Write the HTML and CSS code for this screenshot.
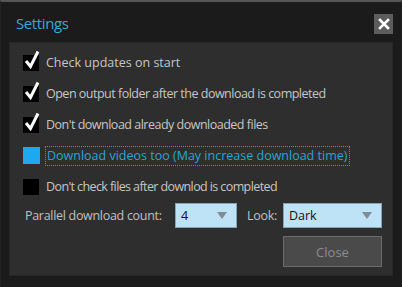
FILE: index.html
```html
<!DOCTYPE html>
<html lang="en">
<head>
    <meta charset="UTF-8">
    <title>Settings</title>
    <link rel="stylesheet" href="styles.css">
</head>
<body>
    <div class="window">
        <div class="titlebar">
            <span class="title">Settings</span>
            <button class="close-x" aria-label="Close">
                <svg width="12" height="12" viewBox="0 0 12 12"><path d="M2 2 L10 10 M10 2 L2 10" stroke="#fff" stroke-width="2.6" stroke-linecap="square"/></svg>
            </button>
        </div>
        <div class="panel">
            <label class="row">
                <span class="box checked"><svg width="18" height="20" viewBox="0 0 18 20"><path d="M3 11 L7.5 16.5 L15 1.5" fill="none" stroke="#fff" stroke-width="3"/></svg></span>
                <span class="text wide-text">Check updates on start</span>
            </label>
            <label class="row">
                <span class="box checked"><svg width="18" height="20" viewBox="0 0 18 20"><path d="M3 11 L7.5 16.5 L15 1.5" fill="none" stroke="#fff" stroke-width="3"/></svg></span>
                <span class="text">Open output folder after the download is completed</span>
            </label>
            <label class="row">
                <span class="box checked"><svg width="18" height="20" viewBox="0 0 18 20"><path d="M3 11 L7.5 16.5 L15 1.5" fill="none" stroke="#fff" stroke-width="3"/></svg></span>
                <span class="text">Don't download already downloaded files</span>
            </label>
            <label class="row">
                <span class="box active"></span>
                <span class="text focused">Download videos too (May increase download time)</span>
            </label>
            <label class="row">
                <span class="box"></span>
                <span class="text tight-text">Don't check files after downlod is completed</span>
            </label>
            <div class="options">
                <span class="label count">Parallel download count:</span>
                <div class="select small"><span>4</span><i class="arrow"></i></div>
                <span class="label look">Look:</span>
                <div class="select wide"><span>Dark</span><i class="arrow"></i></div>
            </div>
            <div class="actions">
                <button class="close-btn">Close</button>
            </div>
        </div>
    </div>
</body>
</html>
```

FILE: styles.css
```css
body {
    margin: 0;
    padding: 0;
    background: #111;
    font-family: "Open Sans", sans-serif;
}
.window {
    width: 402px;
    height: 287px;
    box-sizing: border-box;
    background: #1b1b1b;
    border-top: 2px solid #555;
    border-left: 1px solid #222;
    border-right: 1px solid #222;
    padding: 0 8px 10px 8px;
}
.titlebar {
    height: 40px;
    display: flex;
    align-items: center;
    justify-content: space-between;
    padding: 0 0 0 7px;
}
.title {
    color: #3aa7cf;
    font-size: 15px;
    letter-spacing: -0.4px;
    margin-top: 2px;
}
.close-x {
    width: 19px;
    height: 20px;
    background: #5c5c5c;
    border: none;
    padding: 0;
    display: flex;
    align-items: center;
    justify-content: center;
    margin-top: 4px;
}
.panel {
    background: #2e2e2e;
    border: 1px solid #262626;
    height: 234px;
    box-sizing: border-box;
    padding: 4px 10px 0 13px;
}
.row {
    display: flex;
    align-items: center;
    height: 31px;
    gap: 7px;
}
.box {
    width: 16px;
    height: 16px;
    background: #000;
    position: relative;
    flex: none;
}
.box svg {
    position: absolute;
    left: 0;
    top: -5px;
}
.box.active {
    background: #1ea8f0;
    width: 17px;
    height: 17px;
}
.text {
    color: #c6c6c6;
    font-size: 12.5px;
    letter-spacing: -0.5px;
    white-space: nowrap;
}
.text.wide-text {
    letter-spacing: 0;
}
.text.tight-text {
    letter-spacing: -0.6px;
}
.text.focused {
    color: #27a6d2;
    letter-spacing: 0;
    border: 1px dotted #2a9fc8;
    padding: 0 2px 1px 1px;
    margin-left: -2px;
}
.options {
    display: flex;
    align-items: center;
    margin-top: 1px;
    margin-left: 2px;
}
.label {
    color: #c0c0c0;
    font-size: 12.5px;
    letter-spacing: -0.3px;
}
.label.count {
    width: 150px;
}
.label.look {
    margin-left: 10px;
    margin-right: 6px;
}
.select {
    height: 25px;
    box-sizing: border-box;
    background: #bfe3f6;
    border: 1px solid #8aa6b6;
    display: flex;
    align-items: center;
    justify-content: space-between;
    padding: 0 9px 0 5px;
    font-size: 12.5px;
    color: #111;
}
.select.small {
    width: 62px;
}
.select.wide {
    width: 99px;
}
.arrow {
    width: 0;
    height: 0;
    border-left: 5px solid transparent;
    border-right: 5px solid transparent;
    border-top: 7px solid #7d8c96;
}
.actions {
    display: flex;
    justify-content: flex-end;
    margin-top: 8px;
}
.close-btn {
    width: 99px;
    height: 31px;
    background: #4a4a4a;
    border: 1px solid #6b6b6b;
    color: #8c8c8c;
    font-family: "Open Sans", sans-serif;
    font-size: 13px;
}
```
